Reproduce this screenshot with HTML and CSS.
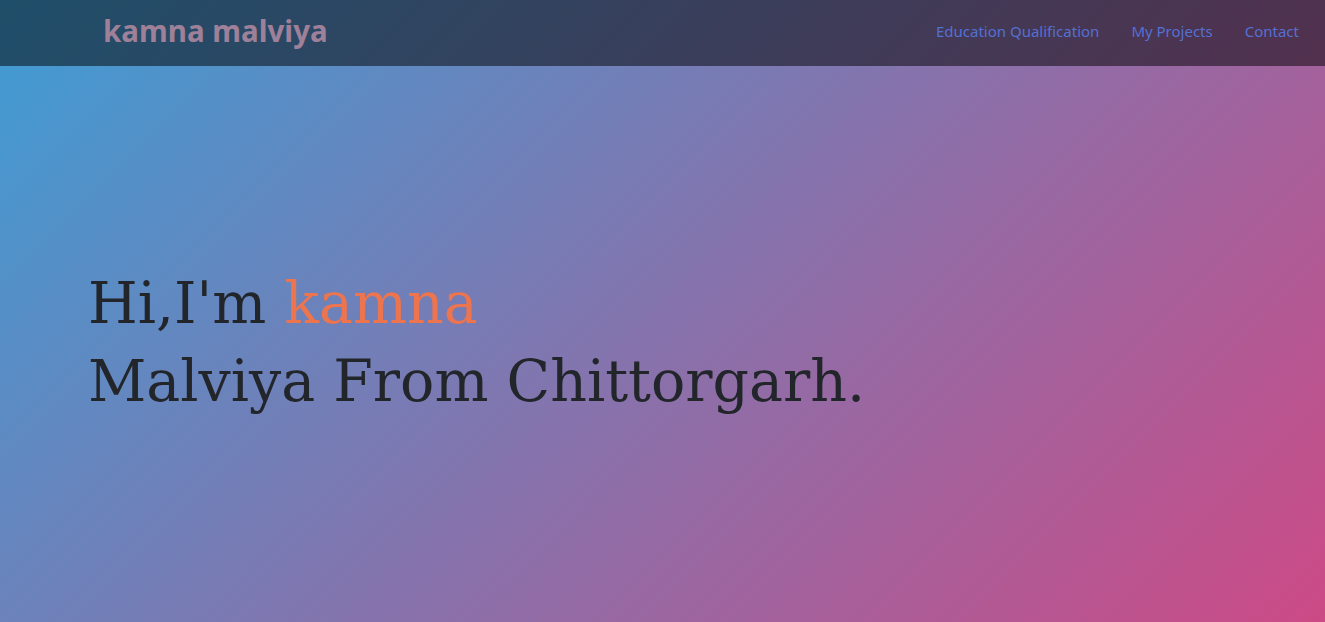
FILE: index.html
```html
<!DOCTYPE html>
<html>
<head>
<meta charset="utf-8">
<link rel="stylesheet" href="styles.css">
</head>
<body>
<header class="nav">
  <a class="brand" href="#">kamna malviya</a>
  <ul class="links">
    <li><a href="#">Education Qualification</a></li>
    <li><a href="#">My Projects</a></li>
    <li><a href="#">Contact</a></li>
  </ul>
</header>
<main class="hero">
  <h1 class="title">Hi,I'm <span class="accent">kamna</span><br>Malviya From Chittorgarh.</h1>
</main>
</body>
</html>
```

FILE: styles.css
```css
* { box-sizing: border-box; }
html, body { margin: 0; padding: 0; }
body {
  min-height: 100vh;
  background: linear-gradient(135deg, #3e9dd4, #cc4a86);
  font-family: "Noto Sans", "Open Sans", sans-serif;
}
.nav {
  height: 66px;
  background: rgba(0, 0, 0, 0.5);
  display: flex;
  align-items: center;
  justify-content: space-between;
  padding: 0 10px 5px 103px;
}
.brand {
  color: #9e8099;
  font-weight: 700;
  font-size: 29.5px;
  text-decoration: none;
}
.links {
  display: flex;
  list-style: none;
  margin: 0;
  padding: 0;
}
.links a {
  display: block;
  padding: 8px 16px;
  color: #5470d3;
  font-size: 15px;
  text-decoration: none;
}
.hero {
  padding: 198px 0 0 88px;
}
.title {
  margin: 0;
  font-family: "DejaVu Serif", Georgia, serif;
  font-weight: 400;
  font-size: 57px;
  line-height: 78px;
  color: #22262b;
}
.accent { color: #ec744e; }
```
